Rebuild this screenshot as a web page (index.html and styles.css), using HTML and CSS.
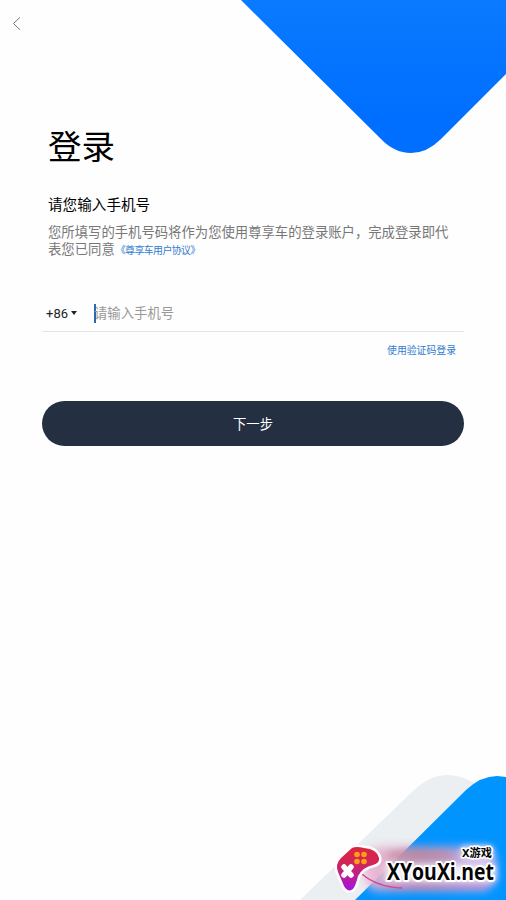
FILE: index.html
```html
<!DOCTYPE html>
<html lang="zh-CN">
<head>
<meta charset="utf-8">
<title>登录</title>
<link rel="stylesheet" href="styles.css">
</head>
<body>
<main class="screen">
  <svg class="decor decor-top" width="270" height="156" viewBox="236 0 270 156" aria-hidden="true">
    <defs><linearGradient id="top" x1="0" y1="0" x2="0" y2="1"><stop offset="0" stop-color="#0a7aff"/><stop offset=".75" stop-color="#006fff"/></linearGradient></defs>
    <path d="M241 0 L380 138 Q394 153 411 153 Q427 153 441 139 L506 74 V0Z" fill="url(#top)"/>
  </svg>
  <svg class="decor decor-bottom" width="216" height="140" viewBox="290 760 216 140" aria-hidden="true">
    <path d="M300 900 L414 790 Q430 775 446 775 Q462 775 476 784 L480 900Z" fill="#ebeff2"/>
    <path d="M355 900 L466 790 Q481 776 497 776 L506 777 V900Z" fill="#0094ff"/>
  </svg>
  <header class="nav">
    <button class="back" aria-label="返回"><svg width="10" height="14" viewBox="0 0 10 14"><path d="M9 1.3 2.5 7.5 9 13.7" fill="none" stroke="#777" stroke-width="1"/></svg></button>
  </header>
  <section class="intro">
    <h1>登录</h1>
    <h2>请您输入手机号</h2>
    <p>您所填写的手机号码将作为您使用尊享车的登录账户，完成登录即代<br>表您已同意<a class="terms">《尊享车用户协议》</a></p>
  </section>
  <form class="login">
    <div class="phone">
      <span class="code">+86</span><i class="caret"></i>
      <span class="cursor"></span><span class="placeholder">请输入手机号</span>
    </div>
    <a class="switch">使用验证码登录</a>
    <button class="next" type="button">下一步</button>
  </form>
  <svg class="brand" width="186" height="70" viewBox="320 830 186 70" aria-label="XYouXi.net">
    <defs>
      <filter id="glow" x="-30%" y="-50%" width="160%" height="200%"><feGaussianBlur stdDeviation="5"/></filter>
      <filter id="soft" x="-20%" y="-60%" width="140%" height="220%"><feGaussianBlur stdDeviation="3"/></filter>
      <linearGradient id="haze" x1="0" y1="0" x2="1" y2="0"><stop offset="0" stop-color="#eeb9d9"/><stop offset=".4" stop-color="#cf98b8"/><stop offset="1" stop-color="#d5b3ee"/></linearGradient>
      <linearGradient id="pad" x1="0" y1="0" x2="0" y2="1"><stop offset="0" stop-color="#dd253f"/><stop offset=".4" stop-color="#cf255c"/><stop offset="1" stop-color="#a414df"/></linearGradient>
    </defs>
    <rect x="364" y="847" width="132" height="44" rx="15" fill="url(#haze)" opacity=".9" filter="url(#glow)"/>
    <ellipse cx="420" cy="855" rx="34" ry="6" fill="#b97c88" opacity=".45" filter="url(#soft)"/>
    <path d="M388 867 H493 V879 H388Z M464 849 H490 V856 H464Z" fill="#fff" stroke="#fff" stroke-width="5" opacity=".85" filter="url(#soft)"/>
    <path d="M385 884 Q415 890 488 887" fill="none" stroke="#e26cab" stroke-width="4" opacity=".45" filter="url(#soft)"/>
    <path d="M362 874 Q377 887 402 888" fill="none" stroke="#d64991" stroke-width="1.5"/>
    <path d="M352 848 Q356 846 364 848 Q377 849 379 858 Q380 863 373 865 Q363 867 358 876 Q356 885 353 889 Q348 893 344 886 L338 872 Q335 864 341 858Z" fill="url(#pad)" stroke="#fff" stroke-width="5" stroke-linejoin="round" paint-order="stroke"/>
    <g fill="#ff9e18"><circle cx="357" cy="854.5" r="2.8"/><circle cx="364" cy="854.5" r="2.8"/><circle cx="357" cy="861.5" r="2.8"/><circle cx="364" cy="861.5" r="2.8"/></g>
    <path d="M344 867 351 875 M351 867 344 875" stroke="#fff" stroke-width="5.5" stroke-linecap="round"/>
    <text class="brand-name" x="387" y="880" textLength="107" lengthAdjust="spacingAndGlyphs">XYouXi.net</text>
    <text class="brand-tag" x="462" y="856.5" textLength="30" lengthAdjust="spacingAndGlyphs">X游戏</text>
  </svg>
</main>
</body>
</html>
```
FILE: styles.css
```css
* { box-sizing: border-box; }
body { margin: 0; background: #fefefe; font-family: Roboto, "Noto Sans CJK SC", sans-serif; }
.screen { position: relative; width: 506px; height: 900px; overflow: hidden; }
.decor { position: absolute; right: 0; }
.decor-top { top: 0; }
.decor-bottom { bottom: 0; }
.nav { height: 46px; padding: 16px 0 0 11px; }
button { border: 0; padding: 0; font-family: inherit; }
.back { display: block; width: 10px; height: 14px; background: none; }
.back svg { display: block; }
.intro { padding: 77px 0 0 48px; }
h1 { margin: 0; font-size: 33.5px; font-weight: 400; line-height: 50px; color: #000; }
h2 { margin: 22px 0 0; font-size: 14.6px; font-weight: 400; line-height: 20px; color: #000; }
p { margin: 10px 0 0; font-size: 13.35px; line-height: 16.5px; color: #777; white-space: nowrap; }
.terms { margin-left: 1px; font-size: 9.95px; line-height: 1; letter-spacing: -.6px; color: #317bd0; }
.login { display: flex; flex-direction: column; margin: 41px 42px 0; }
.phone { display: flex; align-items: center; height: 33px; padding: 0 0 3px 4px; border-bottom: 1px solid #e2e4e6; }
.code { width: 23px; font-size: 13px; color: #222; white-space: nowrap; }
.caret { margin: 0 0 2px 2px; border: 3.5px solid transparent; border-top: 4px solid #222; border-bottom: 0; }
.cursor { width: 2px; height: 19px; margin-left: 17px; background: #2868b5; }
.placeholder { margin-left: -2px; font-size: 13.35px; line-height: 18px; color: #999; }
.switch { align-self: flex-end; margin: 11px 8px 0 0; font-size: 9.85px; line-height: 16px; color: #317bd0; }
.next { height: 45px; margin-top: 42px; border-radius: 23px; background: #242f42; color: #fff; font-size: 13.35px; }
.brand { position: absolute; right: 0; bottom: 0; }
.brand text { fill: #050505; stroke: #fff; paint-order: stroke; stroke-linejoin: round; font-weight: 700; }
.brand-name { font-family: "Open Sans", "Noto Sans", sans-serif; font-size: 23px; stroke-width: 4px; }
.brand-tag { font-family: "Noto Sans", "Noto Sans CJK SC", sans-serif; font-size: 11px; stroke-width: 3px; }
```
